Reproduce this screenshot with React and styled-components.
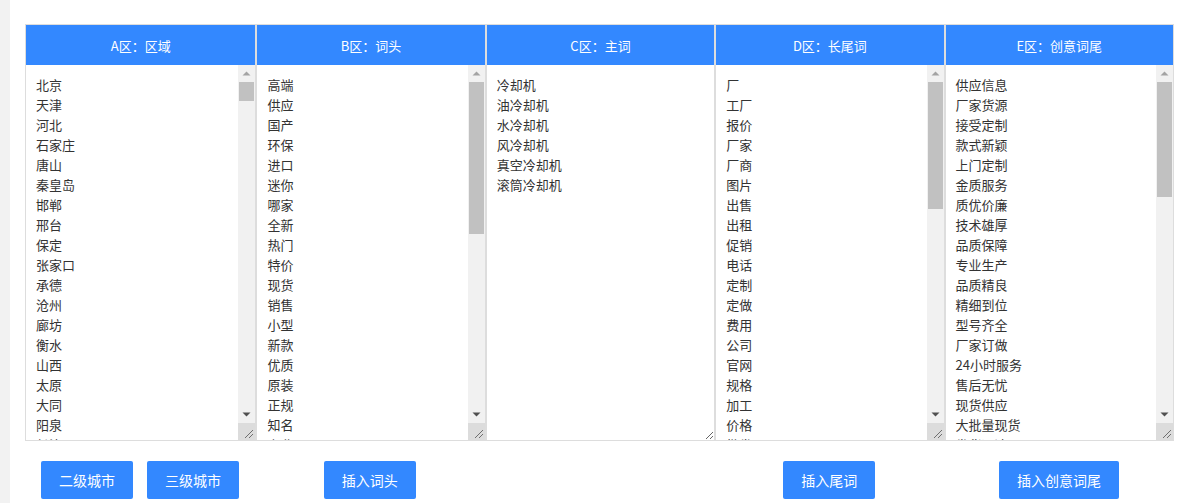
import React from 'react';
import styled, { createGlobalStyle } from 'styled-components';

const GlobalStyle = createGlobalStyle`
  html, body {
    margin: 0;
    padding: 0;
    background: #f2f2f2;
    font-family: "Noto Sans CJK SC", "Noto Sans", "Liberation Sans", sans-serif;
  }
  * { box-sizing: border-box; }
`;

const regions =
  '北京 天津 河北 石家庄 唐山 秦皇岛 邯郸 邢台 保定 张家口 承德 沧州 廊坊 衡水 山西 太原 大同 阳泉 长治 晋城 朔州 晋中 运城 忻州 临汾 吕梁 ' +
  '内蒙古 呼和浩特 包头 乌海 赤峰 通辽 鄂尔多斯 呼伦贝尔 巴彦淖尔 乌兰察布 辽宁 沈阳 大连 鞍山 抚顺 本溪 丹东 锦州 营口 阜新 辽阳 盘锦 铁岭 朝阳 葫芦岛 ' +
  '吉林 长春 四平 辽源 通化 白山 松原 白城 黑龙江 哈尔滨 齐齐哈尔 鸡西 鹤岗 双鸭山 大庆 伊春 佳木斯 七台河 牡丹江 黑河 绥化 上海 江苏 南京 无锡 徐州 常州 苏州 南通 连云港 淮安 盐城 扬州 镇江 泰州 宿迁 ' +
  '浙江 杭州 宁波 温州 嘉兴 湖州 绍兴 金华 衢州 舟山 台州 丽水 安徽 合肥 芜湖 蚌埠 淮南 马鞍山 淮北 铜陵 安庆 黄山 滁州 阜阳 宿州 六安 亳州 池州 宣城 ' +
  '福建 福州 厦门 莆田 三明 泉州 漳州 南平 龙岩 宁德 江西 南昌 景德镇 萍乡 九江 新余 鹰潭 赣州 吉安 宜春 抚州 上饶 山东 济南 青岛 淄博 枣庄 东营 烟台 潍坊 济宁 泰安 威海 日照 临沂 德州 聊城 滨州 菏泽 ' +
  '河南 郑州 开封 洛阳 平顶山 安阳 鹤壁 新乡 焦作 濮阳 许昌 漯河 三门峡 南阳 商丘 信阳 周口 驻马店 湖北 武汉 黄石 十堰 宜昌 襄阳 鄂州 荆门 孝感 荆州 黄冈 咸宁 随州 ' +
  '湖南 长沙 株洲 湘潭 衡阳 邵阳 岳阳 常德 张家界 益阳 郴州 永州 怀化 娄底 广东 广州 韶关 深圳 珠海 汕头 佛山 江门 湛江 茂名 肇庆 惠州 梅州 汕尾 河源 阳江 清远 东莞 中山 潮州 揭阳 云浮 ' +
  '广西 南宁 柳州 桂林 梧州 北海 防城港 钦州 贵港 玉林 百色 贺州 河池 来宾 崇左 海南 海口 三亚 重庆 四川 成都 自贡 攀枝花 泸州 德阳 绵阳 广元 遂宁 内江 乐山 南充 眉山 宜宾 广安 达州 雅安 巴中 资阳 ' +
  '贵州 贵阳 六盘水 遵义 安顺 毕节 铜仁 云南 昆明 曲靖 玉溪 保山 昭通 丽江 普洱 临沧 西藏 拉萨 陕西 西安 铜川 宝鸡 咸阳 渭南 延安 汉中 榆林 安康 商洛 甘肃 兰州 嘉峪关 金昌 白银 天水 武威 张掖 平凉 酒泉 庆阳 定西 陇南 ' +
  '青海 西宁 宁夏 银川 石嘴山 吴忠 固原 中卫 新疆 乌鲁木齐 克拉玛依 吐鲁番 哈密 香港 澳门 台湾';

const heads =
  '高端 供应 国产 环保 进口 迷你 哪家 全新 热门 特价 现货 销售 小型 新款 优质 原装 正规 知名 专业 大型 节能 高效 耐用 实惠 便宜 精品 批发 定制 二手 全自动 半自动 工业 家用 商用 智能 新型 优惠 直销 高品质';

const mains = '冷却机 油冷却机 水冷却机 风冷却机 真空冷却机 滚筒冷却机';

const tails =
  '厂 工厂 报价 厂家 厂商 图片 出售 出租 促销 电话 定制 定做 费用 公司 官网 规格 加工 价格 批发 品牌 设备 生产 生产厂家 视频 维修 型号 原理 直销 制造 租赁 多少钱 哪里有 供应商 排名 参数 安装 结构 配件 价格表 推荐 口碑 行情 市场 销售 联系方式 哪家好 用途';

const creative =
  '供应信息 厂家货源 接受定制 款式新颖 上门定制 金质服务 质优价廉 技术雄厚 品质保障 专业生产 品质精良 精细到位 型号齐全 厂家订做 24小时服务 售后无忧 现货供应 大批量现货 发货迅速 货源充足 价格优惠 诚信经营 欢迎来电 量大从优 按需定制 免费设计 包安装 包运输 品质上乘 规格齐全 服务周到 经久耐用 性能稳定 操作简便 厂家直供 一站式服务 质量可靠 来图定制 支持定做 全国发货 放心选购 品质一流 技术领先 信誉保证 专业团队 种类齐全 现货直发 质量上乘 优质服务 价格合理 欢迎咨询 源头厂家';

const columns = [
  { title: 'A区：区域', words: regions, buttons: ['二级城市', '三级城市'] },
  { title: 'B区：词头', words: heads, buttons: ['插入词头'] },
  { title: 'C区：主词', words: mains, buttons: [] },
  { title: 'D区：长尾词', words: tails, buttons: ['插入尾词'] },
  { title: 'E区：创意词尾', words: creative, buttons: ['插入创意词尾'] },
];

const BOX_H = 375;
const LINE_H = 20;
const ARROW = 17;
const TRACK_H = BOX_H - ARROW * 3;

// the headless browser hides native scrollbars, so the rail is drawn by hand
const ScrollBar = ({ lines }) => {
  const contentH = lines * LINE_H + 20;
  const thumb = Math.max(16, Math.round((TRACK_H * BOX_H) / contentH));
  return (
    <Rail>
      <ArrowBtn>
        <svg width="17" height="17" viewBox="0 0 17 17">
          <path d="M4.5 10.5 L8.5 6.5 L12.5 10.5 Z" fill="#a3a3a3" />
        </svg>
      </ArrowBtn>
      <Track>
        <Thumb style={{ height: thumb }} />
      </Track>
      <ArrowBtn>
        <svg width="17" height="17" viewBox="0 0 17 17">
          <path d="M4.5 6.5 L12.5 6.5 L8.5 10.5 Z" fill="#505050" />
        </svg>
      </ArrowBtn>
      <Corner>
        <svg width="17" height="17" viewBox="0 0 17 17">
          <path d="M15 7 L7 15 M15 11 L11 15" stroke="#6e6e6e" strokeWidth="1" />
        </svg>
      </Corner>
    </Rail>
  );
};

const App = () => {
  return (
    <Page>
      <GlobalStyle />
      <Board>
        {columns.map((col, i) => {
          const list = col.words.split(' ');
          const scrolls = list.length * LINE_H + 20 > BOX_H;
          return (
            <Column key={col.title} $first={i === 0}>
              <Header>{col.title}</Header>
              <Body>
                <WordBox $scrolls={scrolls} defaultValue={list.join('\n')} />
                {scrolls && <ScrollBar lines={list.length} />}
              </Body>
            </Column>
          );
        })}
      </Board>
      <Actions>
        {columns.map((col) => (
          <ActionCell key={col.title}>
            {col.buttons.map((b) => (
              <Button key={b} type="button">{b}</Button>
            ))}
          </ActionCell>
        ))}
      </Actions>
    </Page>
  );
};

const Page = styled.div`
  margin-left: 10px;
  min-height: 100vh;
  background: #fff;
  padding: 24px 0 0 15px;
`;

const Board = styled.div`
  width: 1149px;
  display: grid;
  grid-template-columns: repeat(5, 1fr);
  border: 1px solid #ddd;
`;

const Column = styled.div`
  display: flex;
  flex-direction: column;
  min-width: 0;
  border-left: ${(p) => (p.$first ? 'none' : '2px solid #ddd')};
`;

const Header = styled.div`
  height: 40px;
  display: flex;
  align-items: center;
  justify-content: center;
  background: #3388ff;
  color: #fff;
  font-size: 13px;
`;

const Body = styled.div`
  display: flex;
  height: ${BOX_H}px;
`;

const WordBox = styled.textarea`
  display: block;
  flex: 1;
  min-width: 0;
  height: 100%;
  border: none;
  outline: none;
  margin: 0;
  padding: 10px;
  overflow: hidden;
  resize: ${(p) => (p.$scrolls ? 'none' : 'both')};
  font-family: "Noto Sans CJK SC", "Noto Sans", sans-serif;
  font-size: 13px;
  line-height: ${LINE_H}px;
  color: #333;
  background: #fff;
`;

const Rail = styled.div`
  width: 17px;
  flex: none;
  display: flex;
  flex-direction: column;
  background: #f1f1f1;
`;

const ArrowBtn = styled.div`
  height: ${ARROW}px;
  flex: none;
  svg { display: block; }
`;

const Track = styled.div`
  flex: 1;
  padding: 0 1px;
`;

const Thumb = styled.div`
  width: 100%;
  background: #c1c1c1;
`;

const Corner = styled.div`
  height: ${ARROW}px;
  flex: none;
  background: #dcdcdc;
  svg { display: block; }
`;

const Actions = styled.div`
  width: 1149px;
  display: grid;
  grid-template-columns: repeat(5, 1fr);
  padding-top: 20px;
`;

const ActionCell = styled.div`
  display: flex;
  justify-content: center;
  gap: 14px;
`;

const Button = styled.button`
  height: 38px;
  padding: 0 18px;
  border: none;
  border-radius: 2px;
  background: #3388ff;
  color: #fff;
  font-family: "Noto Sans CJK SC", "Noto Sans", sans-serif;
  font-size: 14px;
  cursor: pointer;
`;

export default App;
